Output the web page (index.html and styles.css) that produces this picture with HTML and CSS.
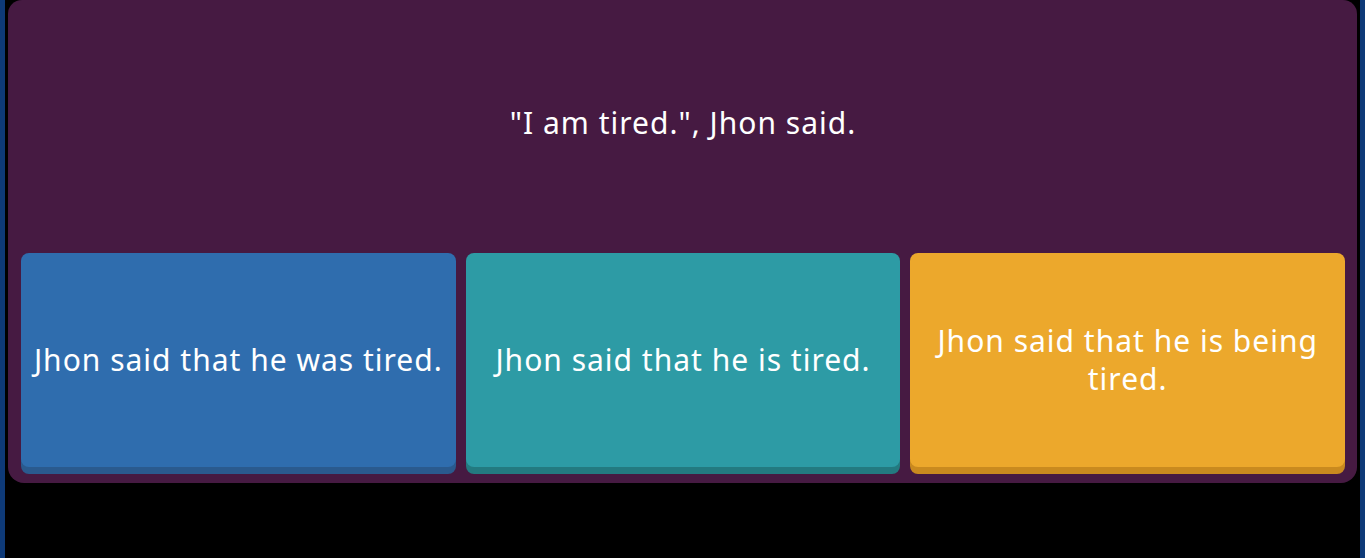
FILE: index.html
```html
<!DOCTYPE html>
<html>
<head>
<meta charset="utf-8">
<link rel="stylesheet" href="styles.css">
</head>
<body>
<div class="frame">
  <div class="card">
    <div class="question">"I am tired.", Jhon said.</div>
    <div class="options">
      <div class="option blue">Jhon said that he was tired.</div>
      <div class="option teal">Jhon said that he is tired.</div>
      <div class="option yellow">Jhon said that he is being tired.</div>
    </div>
  </div>
</div>
</body>
</html>
```
FILE: styles.css
```css
html, body {
  margin: 0;
  padding: 0;
  height: 100%;
  background: #000;
}
body {
  font-family: "Noto Sans", "Open Sans", sans-serif;
  color: #fff;
}
.frame {
  box-sizing: border-box;
  height: 100%;
  border-left: 5px solid #0e3a78;
  border-right: 5px solid #0e3a78;
  padding: 0 3px;
}
.card {
  background: #461a42;
  border-radius: 14px 14px 16px 16px;
  padding: 0 12px 16px 13px;
}
.question {
  height: 253px;
  display: flex;
  align-items: center;
  justify-content: center;
  font-size: 30px;
  letter-spacing: 1px;
  padding-bottom: 8px;
  box-sizing: border-box;
}
.options {
  display: flex;
  gap: 10px;
}
.option {
  flex: 1;
  min-width: 0;
  height: 214px;
  border-radius: 8px;
  display: flex;
  align-items: center;
  justify-content: center;
  text-align: center;
  font-size: 30px;
  letter-spacing: 1px;
  line-height: 38px;
  padding: 0 6px;
}
.blue { background: #2f6dae; box-shadow: 0 7px 0 #2a5a8e; }
.teal { background: #2d9ba5; box-shadow: 0 7px 0 #237a80; }
.yellow { background: #eca82c; box-shadow: 0 7px 0 #c98a1f; }
```
